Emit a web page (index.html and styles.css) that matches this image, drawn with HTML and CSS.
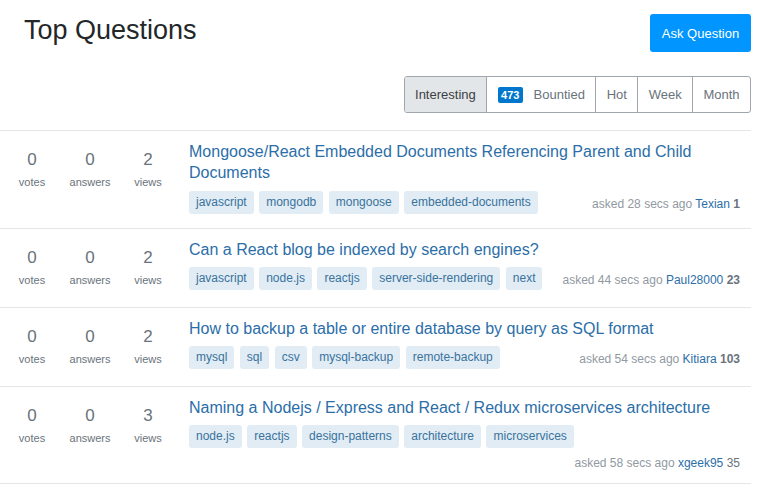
FILE: index.html
```html
<!DOCTYPE html>
<html lang="en">
<head>
<meta charset="utf-8">
<title>Top Questions</title>
<link rel="stylesheet" href="styles.css">
</head>
<body>
<div class="page">
  <div class="header">
    <h1 class="headline">Top Questions</h1>
    <a class="ask-btn" href="#">Ask Question</a>
  </div>
  <div class="filters">
    <div class="tabs">
      <a class="tab is-selected" href="#">Interesting</a>
      <a class="tab" href="#"><span class="badge">473</span>Bountied</a>
      <a class="tab" href="#">Hot</a>
      <a class="tab" href="#">Week</a>
      <a class="tab" href="#">Month</a>
    </div>
  </div>

  <div class="questions">
    <div class="question">
      <div class="stats">
        <div class="stat"><div class="num">0</div><div class="label">votes</div></div>
        <div class="stat"><div class="num">0</div><div class="label">answers</div></div>
        <div class="stat"><div class="num">2</div><div class="label">views</div></div>
      </div>
      <div class="summary">
        <h3 class="q-title"><a href="#">Mongoose/React Embedded Documents Referencing Parent and Child Documents</a></h3>
        <div class="bottom">
          <div class="tags">
            <a class="tag" href="#">javascript</a><a class="tag" href="#">mongodb</a><a class="tag" href="#">mongoose</a><a class="tag" href="#">embedded-documents</a>
          </div>
          <div class="meta">asked 28 secs ago <a class="user" href="#">Texian</a> <span class="rep">1</span></div>
        </div>
      </div>
    </div>

    <div class="question">
      <div class="stats">
        <div class="stat"><div class="num">0</div><div class="label">votes</div></div>
        <div class="stat"><div class="num">0</div><div class="label">answers</div></div>
        <div class="stat"><div class="num">2</div><div class="label">views</div></div>
      </div>
      <div class="summary">
        <h3 class="q-title"><a href="#">Can a React blog be indexed by search engines?</a></h3>
        <div class="bottom">
          <div class="tags">
            <a class="tag" href="#">javascript</a><a class="tag" href="#">node.js</a><a class="tag" href="#">reactjs</a><a class="tag" href="#">server-side-rendering</a><a class="tag" href="#">next</a>
          </div>
          <div class="meta">asked 44 secs ago <a class="user" href="#">Paul28000</a> <span class="rep">23</span></div>
        </div>
      </div>
    </div>

    <div class="question">
      <div class="stats">
        <div class="stat"><div class="num">0</div><div class="label">votes</div></div>
        <div class="stat"><div class="num">0</div><div class="label">answers</div></div>
        <div class="stat"><div class="num">2</div><div class="label">views</div></div>
      </div>
      <div class="summary">
        <h3 class="q-title"><a href="#">How to backup a table or entire database by query as SQL format</a></h3>
        <div class="bottom">
          <div class="tags">
            <a class="tag" href="#">mysql</a><a class="tag" href="#">sql</a><a class="tag" href="#">csv</a><a class="tag" href="#">mysql-backup</a><a class="tag" href="#">remote-backup</a>
          </div>
          <div class="meta">asked 54 secs ago <a class="user" href="#">Kitiara</a> <span class="rep">103</span></div>
        </div>
      </div>
    </div>

    <div class="question">
      <div class="stats">
        <div class="stat"><div class="num">0</div><div class="label">votes</div></div>
        <div class="stat"><div class="num">0</div><div class="label">answers</div></div>
        <div class="stat"><div class="num">3</div><div class="label">views</div></div>
      </div>
      <div class="summary">
        <h3 class="q-title"><a href="#">Naming a Nodejs / Express and React / Redux microservices architecture</a></h3>
        <div class="bottom">
          <div class="tags">
            <a class="tag" href="#">node.js</a><a class="tag" href="#">reactjs</a><a class="tag" href="#">design-patterns</a><a class="tag" href="#">architecture</a><a class="tag" href="#">microservices</a>
          </div>
          <div class="meta meta-below">asked 58 secs ago <a class="user" href="#">xgeek95</a> <span class="rep rep-plain">35</span></div>
        </div>
      </div>
    </div>
  </div>
</div>
</body>
</html>
```

FILE: styles.css
```css
* { box-sizing: border-box; }

html, body {
  margin: 0;
  padding: 0;
  background: #fff;
}

body {
  font-family: "Liberation Sans", Arial, sans-serif;
  color: #242729;
}

a { text-decoration: none; }

.page {
  width: 751px;
}

.header {
  display: flex;
  justify-content: space-between;
  align-items: flex-start;
  padding: 13px 0 0 24px;
}

.headline {
  margin: 0;
  font-size: 27px;
  font-weight: normal;
  line-height: 34px;
  color: #242729;
}

.ask-btn {
  margin-top: 1px;
  width: 101px;
  height: 38px;
  display: flex;
  align-items: center;
  justify-content: center;
  background: #0095ff;
  color: #fff;
  font-size: 13px;
  border-radius: 3px;
}

.filters {
  display: flex;
  justify-content: flex-end;
  margin-top: 24px;
  margin-bottom: 17px;
}

.tabs {
  display: flex;
  border: 1px solid #9fa6ad;
  border-radius: 3px;
  overflow: hidden;
  height: 37px;
}

.tab {
  display: flex;
  align-items: center;
  padding: 0 10.4px;
  font-size: 13px;
  color: #6a737c;
  border-left: 1px solid #9fa6ad;
}

.tab:first-child { border-left: none; }

.tab.is-selected {
  background: #e3e6e8;
  color: #3b4045;
}

.badge {
  display: inline-block;
  background: #0077cc;
  color: #fff;
  font-size: 11px;
  font-weight: bold;
  line-height: 16px;
  height: 16px;
  padding: 0 3.6px;
  border-radius: 2px;
  margin-right: 10.5px;
}

.questions {
  border-bottom: 1px solid #e4e6e8;
}

.question {
  display: flex;
  border-top: 1px solid #e4e6e8;
  padding: 11px 11px 12px 3px;
}

.stats {
  display: flex;
  flex: 0 0 174px;
  margin-right: 12px;
  padding-top: 7px;
}

.stat {
  width: 58px;
  text-align: center;
  color: #6a737c;
}

.num {
  font-size: 17px;
  line-height: 22px;
}

.label {
  font-size: 11px;
  line-height: 14px;
  margin-top: 4px;
}

.summary {
  flex: 1;
  min-width: 0;
  min-height: 55px;
}

.q-title {
  margin: 0 0 5px;
  font-size: 16px;
  font-weight: normal;
  line-height: 20.8px;
}

.q-title a {
  color: #2b6ea8;
}

.bottom {
  display: flex;
  flex-wrap: wrap;
  align-items: center;
  column-gap: 8px;
}

.tags {
  display: flex;
  flex-wrap: wrap;
  gap: 5.5px;
  margin: 2px 0 2px;
}

.tag {
  display: inline-block;
  font-size: 12px;
  line-height: 13px;
  padding: 4px 6px;
  border: 1px solid transparent;
  border-radius: 3px;
  background: #e1ecf4;
  color: #39739d;
}

.meta {
  margin-left: auto;
  padding-top: 3px;
  font-size: 12px;
  line-height: 16px;
  color: #9199a1;
  white-space: nowrap;
}

.meta-below {
  flex-basis: 100%;
  text-align: right;
  padding-top: 5px;
}

.user {
  color: #2b6ea8;
}

.rep {
  font-weight: bold;
  color: #6a737c;
}

.rep-plain {
  font-weight: normal;
}
```
